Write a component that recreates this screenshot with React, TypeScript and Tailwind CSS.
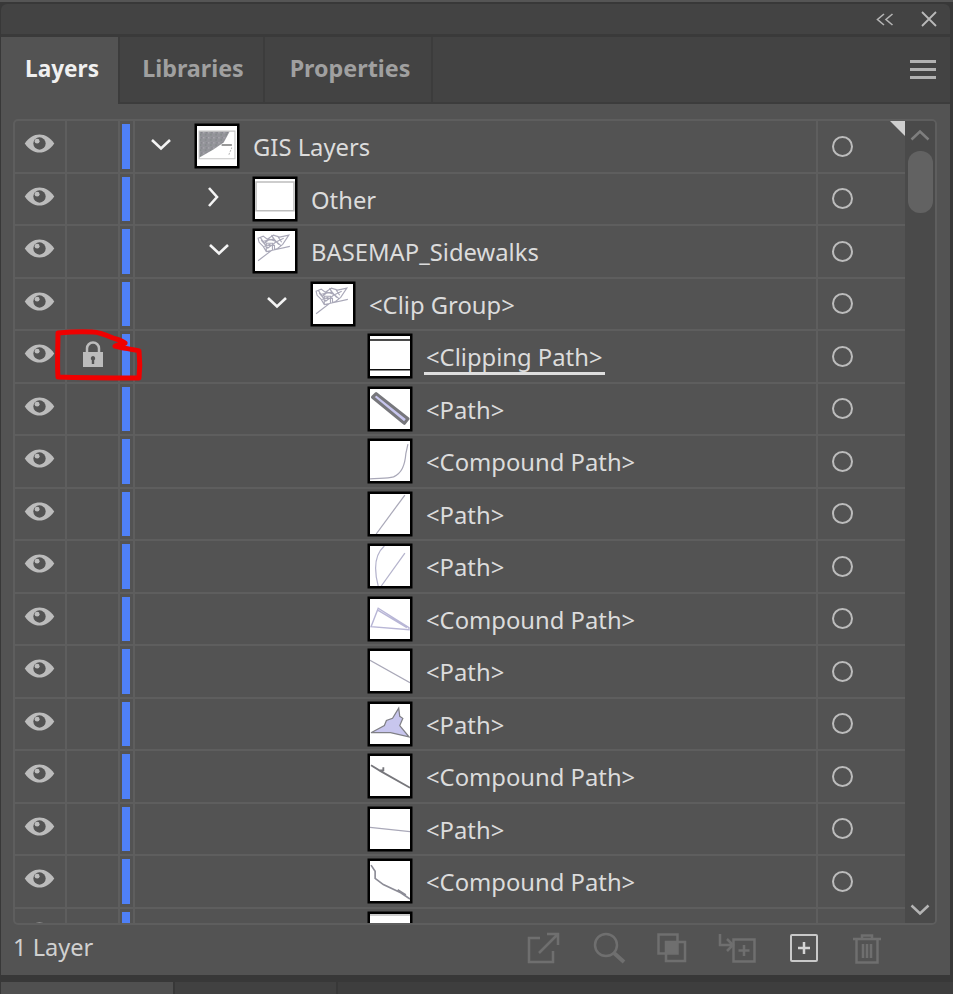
import React from 'react';

const font = { fontFamily: '"Noto Sans", "Open Sans", sans-serif' };

function Eye() {
  return (
    <svg width="31" height="19" viewBox="0 0 32 20">
      <path d="M0.5 10C5 3.5 10 0.5 16 0.5S27 3.5 31.5 10C27 16.5 22 19.5 16 19.5S5 16.5 0.5 10Z" fill="#bcbcbc" />
      <circle cx="16" cy="10" r="6.5" fill="#535353" />
      <circle cx="13.5" cy="7.5" r="2.6" fill="#bcbcbc" />
    </svg>
  );
}

function Lock() {
  return (
    <svg width="22" height="27" viewBox="0 0 22 27">
      <path d="M5 12V7.5a6 6 0 0 1 12 0V12" fill="none" stroke="#bcbcbc" strokeWidth="2.5" />
      <path fillRule="evenodd" d="M1 11h20v15H1ZM11 15a2.3 2.3 0 0 0-1.2 4.2V23h2.4v-3.8A2.3 2.3 0 0 0 11 15Z" fill="#bcbcbc" />
    </svg>
  );
}

function Chevron({ open }: { open: boolean }) {
  return (
    <svg width="22" height="22" viewBox="0 0 22 22" fill="none" stroke="#f4f4f4" strokeWidth="2.6">
      {open ? <path d="M2 7l9 8.5 9-8.5" /> : <path d="M7 2l8 9-8 9" />}
    </svg>
  );
}

const mapLines =
  'M3 7L8 5L12 8L18 4L24 6L33 4L27 13L22 17L16 19L11 20L8 15L4 11ZM5 6L9 12L14 8L20 10L16 4M8 10L18 8L25 14M11 20V12L17 12V19M13 14H19V18M3 29L16 19L34 15M12 17L20 11L28 7M6 9L13 17M22 5L26 11M17 6L23 13M9 15L15 13';

function Thumb({ kind }: { kind: string }) {
  const g = '#a9a8b8';
  return (
    <div className="w-[44px] h-[44px] shrink-0 border-2 border-black ring-[0.5px] ring-black bg-white overflow-hidden">
      <svg width="40" height="40" viewBox="0 0 39 39" fill="none" className="block">
        {kind === 'gis' && (
          <>
            <defs>
              <pattern id="speck" width="5" height="5" patternUnits="userSpaceOnUse">
                <rect width="5" height="5" fill="#94949a" />
                <rect x="1" y="1" width="1" height="1" fill="#b8b8bc" />
                <rect x="3" y="3" width="1" height="1" fill="#6f7f74" />
                <rect x="4" y="1" width="1" height="1" fill="#7c7c84" />
              </pattern>
            </defs>
            <path d="M2 5H32L26 16L16 23L2 31Z" fill="url(#speck)" />
            <path d="M2 5H37V32H2Z" stroke="#c4c4c4" />
            <path d="M24 18.5H34" stroke="#777" strokeWidth="1.5" />
            <path d="M31 28l3-7" stroke="#bbb" strokeDasharray="2 1" />
          </>
        )}
        {kind === 'other' && <path d="M1 3H38V31H1Z" stroke="#bdbdbd" strokeWidth="1.5" />}
        {kind === 'map' && <path d={mapLines} stroke={g} strokeWidth="1.1" />}
        {kind === 'clip' && <path d="M0 4H39M0 33H39" stroke="#111" strokeWidth="1.5" />}
        {kind === 'bar' && <path d="M2.5 8L6 4.5L37 29L33.5 33.5Z" fill="#c8c6ee" stroke="#77777c" strokeWidth="3" strokeLinejoin="round" />}
        {kind === 'curve' && <path d="M0 37C8 36 16 37 23 35C31 31 34 24 35 12L37 3" stroke={g} strokeWidth="1.2" />}
        {kind === 'line' && <path d="M6 39L34 1" stroke={g} strokeWidth="1.2" />}
        {kind === 'arc' && (
          <>
            <path d="M14 0C6 7 3 20 8 39" stroke="#b4b3cc" strokeWidth="1.2" />
            <path d="M11 39L34 7" stroke="#b4b3cc" strokeWidth="1.2" />
          </>
        )}
        {kind === 'wedge' && <path d="M1 27L8 9L38 28L38 30ZM8 11L36 28" stroke="#b8b6d6" strokeWidth="1.4" />}
        {kind === 'diag' && <path d="M0 9L39 31" stroke={g} strokeWidth="1.2" />}
        {kind === 'blob' && <path d="M1 28L14 21L16 16L22 14L28 4L29 12L32 14L29 21L38 32L20 28Z" fill="#c8c6ee" stroke="#808086" strokeWidth="1.2" />}
        {kind === 'rail' && <path d="M1 9L9 14L13 14L13 11M9 14L39 31" stroke="#77777c" strokeWidth="1.8" />}
        {kind === 'flat' && <path d="M0 18L39 22" stroke={g} strokeWidth="1.2" />}
        {kind === 'hook' && <path d="M1 4L5 10L5 17L13 23L30 31L39 37M27 28L35 33" stroke="#8c8c96" strokeWidth="1.6" />}
        {kind === 'top' && <path d="M0 1H39" stroke="#999" />}
      </svg>
    </div>
  );
}

const rows = [
  { label: 'GIS Layers', level: 0, arrow: 'open', thumb: 'gis' },
  { label: 'Other', level: 1, arrow: 'closed', thumb: 'other' },
  { label: 'BASEMAP_Sidewalks', level: 1, arrow: 'open', thumb: 'map' },
  { label: '<Clip Group>', level: 2, arrow: 'open', thumb: 'map' },
  { label: '<Clipping Path>', level: 3, thumb: 'clip', locked: true, selected: true },
  { label: '<Path>', level: 3, thumb: 'bar' },
  { label: '<Compound Path>', level: 3, thumb: 'curve' },
  { label: '<Path>', level: 3, thumb: 'line' },
  { label: '<Path>', level: 3, thumb: 'arc' },
  { label: '<Compound Path>', level: 3, thumb: 'wedge' },
  { label: '<Path>', level: 3, thumb: 'diag' },
  { label: '<Path>', level: 3, thumb: 'blob' },
  { label: '<Compound Path>', level: 3, thumb: 'rail' },
  { label: '<Path>', level: 3, thumb: 'flat' },
  { label: '<Compound Path>', level: 3, thumb: 'hook' },
  { label: '', level: 3, thumb: 'top' },
];

const indents = ['pl-[60px]', 'pl-[118px]', 'pl-[176px]', 'pl-[233px]'];
const arrowIndents: Record<string, string> = {
  'GIS Layers': 'left-[15px]',
  Other: 'left-[67px]',
  BASEMAP_Sidewalks: 'left-[73px]',
  '<Clip Group>': 'left-[131px]',
};

function Row({ row }: { row: (typeof rows)[number] }) {
  return (
    <div className="h-[52.5px] shrink-0 flex border-b-2 border-[#5e5e5e]">
      <div className="w-[52px] shrink-0 flex items-center justify-center border-r-2 border-[#5e5e5e] pb-[5px] pr-[1px]">
        <Eye />
      </div>
      <div className="w-[53px] shrink-0 flex items-center justify-center border-r-2 border-[#5e5e5e] pb-[4px]">
        {row.locked && <Lock />}
      </div>
      <div className="w-[15px] shrink-0 flex justify-center py-[3px] border-r-2 border-[#5e5e5e]">
        <div className="w-[8px] bg-[#4f80f7] -ml-[2px]" />
      </div>
      <div className={`relative flex-1 flex items-center gap-[14px] ${indents[row.level]}`}>
        {row.arrow && (
          <div className={`absolute top-[12px] ${arrowIndents[row.label]}`}>
            <Chevron open={row.arrow === 'open'} />
          </div>
        )}
        <Thumb kind={row.thumb} />
        <span className={`mt-[2px] text-[23.8px] leading-[30px] text-[#dcdcdc] whitespace-pre ${row.selected ? 'border-b-[3px] border-[#dedede] -mb-[3px] px-[2px] -ml-[2px]' : ''}`}>
          {row.label}
        </span>
      </div>
    </div>
  );
}

function Target() {
  return (
    <div className="h-[52.5px] shrink-0 flex items-center pl-[14px] border-b-2 border-[#5e5e5e]">
      <div className="w-[21px] h-[21px] rounded-full border-[2.5px] border-[#bcbcbc]" />
    </div>
  );
}

function FooterIcons() {
  const c = '#6f6f6f';
  return (
    <div className="flex items-center">
      <svg width="34" height="32" viewBox="0 0 34 32" fill="none" stroke={c} strokeWidth="2.5" className="mr-[32px]">
        <path d="M13 6H2V30H26V19" />
        <path d="M12 21L30 3M20 2H31V13" />
      </svg>
      <svg width="33" height="32" viewBox="0 0 33 32" fill="none" stroke={c} className="mr-[31px]">
        <circle cx="13" cy="13" r="11" strokeWidth="2.5" />
        <path d="M21 21L31 30" strokeWidth="4" />
      </svg>
      <svg width="30" height="30" viewBox="0 0 30 30" fill="none" stroke={c} strokeWidth="2.5" className="mr-[31px]">
        <rect x="1.5" y="1.5" width="19" height="19" />
        <rect x="9" y="9" width="19" height="19" />
        <rect x="9" y="9" width="11.5" height="11.5" fill={c} stroke="none" />
      </svg>
      <svg width="38" height="30" viewBox="0 0 38 30" fill="none" stroke={c} strokeWidth="2.5" className="mr-[34px]">
        <path d="M2 1V12H14M9 6L15 12L9 18" />
        <rect x="15.5" y="6.5" width="21" height="22" />
        <path d="M26 12V23M20.5 17.5H31.5" />
      </svg>
      <div className="w-[28px] h-[28px] border-[2.5px] border-[#c9c9c9] rounded-[2px] flex items-center justify-center mr-[35px]">
        <svg width="14" height="14" viewBox="0 0 14 14" stroke="#d4d4d4" strokeWidth="2.5">
          <path d="M7 1V13M1 7H13" />
        </svg>
      </div>
      <svg width="28" height="31" viewBox="0 0 28 31" fill="none" stroke={c} strokeWidth="2.5">
        <path d="M0 6H28M9 6V2.5H19V6" />
        <path d="M3.5 6V29.5H24.5V6" />
        <path d="M10 11V25M14 11V25M18 11V25" />
      </svg>
    </div>
  );
}

export default function App() {
  return (
    <div className="relative w-[953px] h-[994px] overflow-hidden bg-[#383838] select-none" style={font}>
      <div className="h-[2px] bg-[#555555]" />
      <div className="h-[2px]" />

      {/* panel */}
      <div className="ml-[1px] mr-[3px] rounded-t-[6px] overflow-hidden">
        <div className="h-[30px] bg-[#434343] border-b-[3px] border-[#3a3a3a] flex items-center justify-end box-content -mb-[3px]">
          <svg width="18" height="13" viewBox="0 0 18 13" fill="none" stroke="#b4b4b4" strokeWidth="1.6" className="mr-[27px]">
            <path d="M8 1L1.5 6.5L8 12M16.5 1L10 6.5L16.5 12" />
          </svg>
          <svg width="16" height="16" viewBox="0 0 16 16" fill="none" stroke="#b9b9b9" strokeWidth="1.8" className="mr-[13px]">
            <path d="M1 1L15 15M15 1L1 15" />
          </svg>
        </div>

        <div className="h-[67px] mt-[3px] bg-[#434343] flex items-stretch border-b-[2px] border-[#3c3c3c]">
          <div className="w-[117px] -mb-[2px] bg-[#535353] flex items-center pl-[24px] text-[22.6px] font-bold text-[#f0f0f0] pb-[3px]">
            Layers
          </div>
          <div className="w-[2px] bg-[#3c3c3c]" />
          <div className="w-[143px] flex items-center justify-center pl-[3px] text-[23.3px] font-bold text-[#a0a0a0] pb-[3px]">
            Libraries
          </div>
          <div className="w-[2px] bg-[#3c3c3c]" />
          <div className="w-[166px] flex items-center justify-center pl-[4px] text-[23.3px] font-bold text-[#a0a0a0] pb-[3px]">
            Properties
          </div>
          <div className="w-[2px] bg-[#3c3c3c]" />
          <div className="flex-1 flex items-center justify-end pr-[14px]">
            <div className="w-[26px] flex flex-col gap-[5px] pb-[1px]">
              <div className="h-[3px] bg-[#b2b2b2]" />
              <div className="h-[3px] bg-[#b2b2b2]" />
              <div className="h-[3px] bg-[#b2b2b2]" />
            </div>
          </div>
        </div>

        <div className="h-[871px] bg-[#535353] pt-[15px] pl-[12px] pr-[13px]">
          {/* layers table */}
          <div className="relative h-[806px] flex border-2 border-[#5e5e5e] rounded-[5px] overflow-hidden">
            <div className="w-[801px] shrink-0 flex flex-col overflow-hidden">
              {rows.map((row, i) => (
                <Row key={i} row={row} />
              ))}
            </div>
            <div className="w-[2px] shrink-0 bg-[#5e5e5e]" />
            <div className="w-[87px] shrink-0 flex flex-col overflow-hidden">
              {rows.map((_, i) => (
                <Target key={i} />
              ))}
            </div>
            <div className="relative flex-1 bg-[#4a4a4a] flex flex-col items-center">
              <svg width="20" height="12" viewBox="0 0 20 12" fill="none" stroke="#7e7e7e" strokeWidth="2.5" className="mt-[8px] shrink-0">
                <path d="M1.5 10.5L10 2.5L18.5 10.5" />
              </svg>
              <div className="w-[25px] h-[62px] mt-[10px] rounded-[12px] bg-[#626262] shrink-0" />
              <svg width="20" height="12" viewBox="0 0 20 12" fill="none" stroke="#b4b4b4" strokeWidth="2.5" className="mt-auto mb-[7px] shrink-0">
                <path d="M1.5 1.5L10 9.5L18.5 1.5" />
              </svg>
            </div>
            <div className="absolute top-0 left-[875px] w-0 h-0 border-t-[15px] border-l-[15px] border-t-[#cfcfcf] border-l-transparent" />
          </div>

          <div className="h-[50px] flex items-center justify-between pr-[56px] pb-[4px]">
            <span className="text-[23.6px] text-[#d0d0d0]">1 Layer</span>
            <FooterIcons />
          </div>
        </div>
      </div>

      {/* lower dock tabs */}
      <div className="mt-[7px] flex h-[12px] gap-[2px] pl-[1px]">
        <div className="w-[172px] bg-[#505050]" />
        <div className="w-[161px] bg-[#414141]" />
        <div className="flex-1 bg-[#3e3e3e]" />
      </div>

      {/* red markup drawn on top of the screenshot */}
      <svg width="953" height="994" viewBox="0 0 953 994" fill="none" className="absolute inset-0 pointer-events-none">
        <path
          d="M125 343C121 340 116 339 113 338C106 335 99 332 93 332C80 331 68 332 58 333C58 347 57 362 58 377C85 378 112 378 139 378C140 369 140 360 139 351C131 349 122 348 115 346C118 345 122 344 125 343"
          stroke="#f00000"
          strokeWidth="5"
          strokeLinecap="round"
          strokeLinejoin="round"
        />
      </svg>
    </div>
  );
}
